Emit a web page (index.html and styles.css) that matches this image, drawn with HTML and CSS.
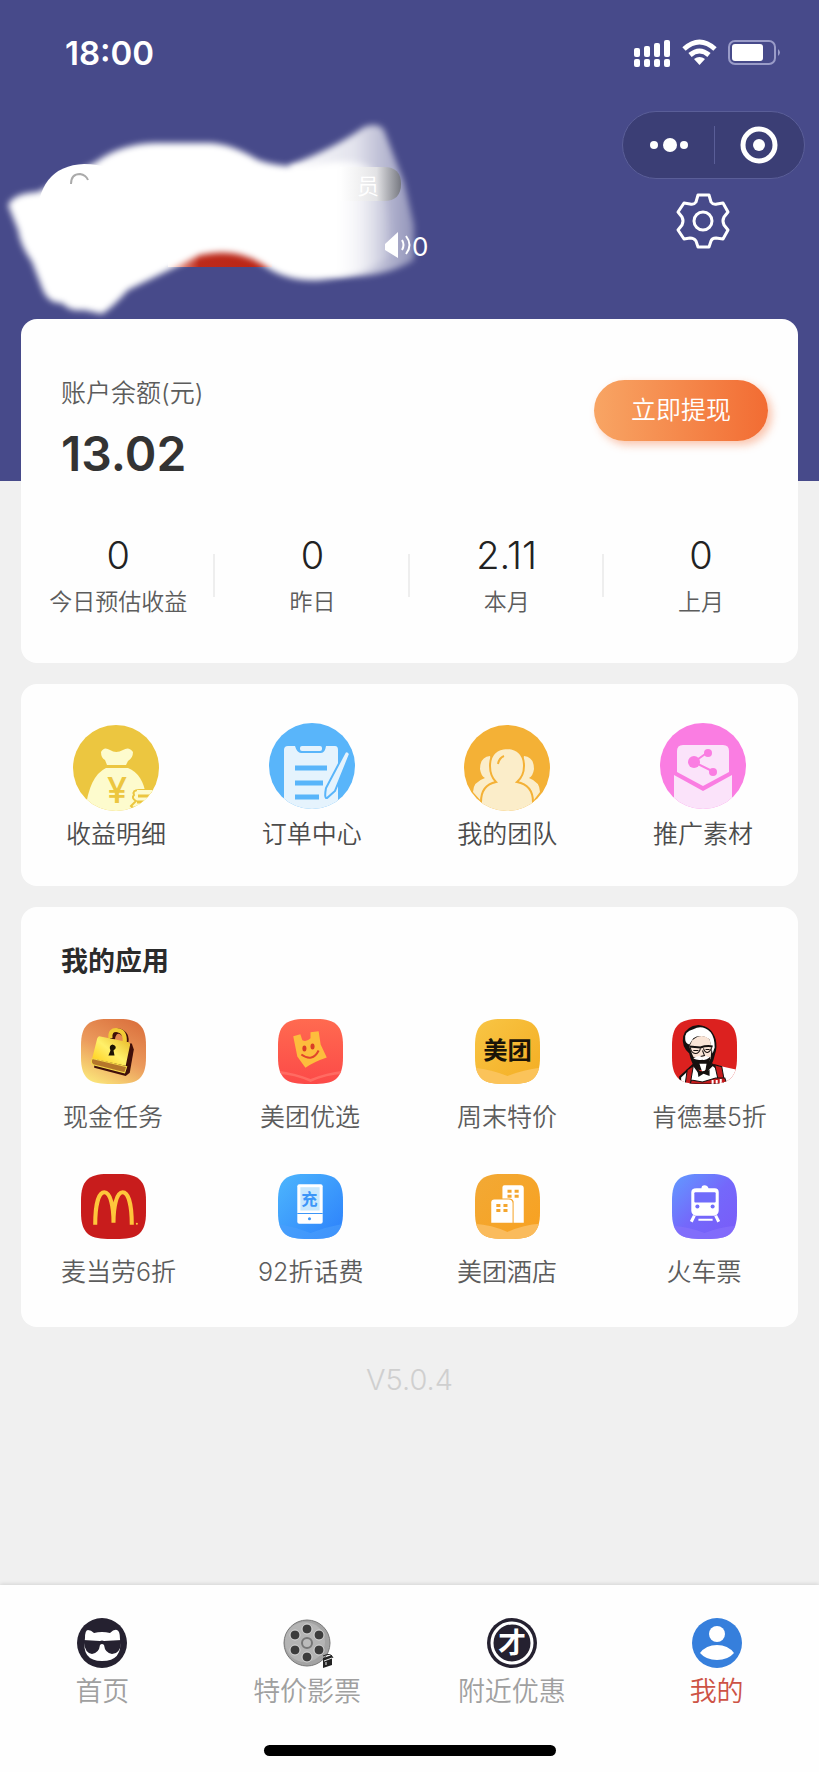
FILE: index.html
```html
<!DOCTYPE html>
<html lang="zh-CN">
<head>
  <meta charset="UTF-8" />
  <meta name="viewport" content="width=device-width, initial-scale=1.0" />
  <title>我的</title>
  <link rel="stylesheet" href="styles.css">
</head>
<body>
  <header class="header">
    <div class="status-bar">
      <span class="time">18:00</span>
      <svg class="status-icons" width="150" height="30" viewBox="0 0 150 30" aria-hidden="true">
        <g fill="#fff">
          <rect x="4" y="10" width="6" height="9" rx="2"/><rect x="14" y="8" width="6" height="11" rx="2"/><rect x="24" y="5" width="6" height="14" rx="2"/><rect x="34" y="2" width="6" height="17" rx="2"/>
          <rect x="4" y="21" width="6" height="8" rx="2"/><rect x="14" y="21" width="6" height="8" rx="2"/><rect x="24" y="21" width="6" height="8" rx="2"/><rect x="34" y="21" width="6" height="8" rx="2"/>
          <path d="M69.500 27 L64 21 Q69.500 17 75 21Z"/>
          <rect x="102" y="6" width="31" height="17" rx="3"/>
        </g>
        <g fill="none" stroke="#fff" stroke-width="5">
          <path d="M54 11 Q69.500 -3 85 11"/>
          <path d="M60 17 Q69.500 9 79 17"/>
        </g>
        <rect x="99" y="3" width="46" height="23" rx="6" fill="none" stroke="#9a9cc8" stroke-width="2"/>
        <path d="M148 11 Q152 14.500 148 18Z" fill="#9a9cc8"/>
      </svg>
    </div>
    <div class="profile">
      <!-- 头像、昵称涂抹区 -->
      <svg class="smear" width="450" height="219" viewBox="0 0 450 219" role="img" aria-label="用户信息">
        <defs>
          <filter id="soft" x="-10%" y="-10%" width="120%" height="120%"><feGaussianBlur stdDeviation="3"/></filter>
          <linearGradient id="tail" x1="0" x2="1"><stop offset="0" stop-color="#fff"/><stop offset=".55" stop-color="#fff" stop-opacity=".85"/><stop offset="1" stop-color="#fff" stop-opacity=".4"/></linearGradient>
          <linearGradient id="veil" x1="0" x2="1"><stop offset=".86" stop-color="#fff"/><stop offset="1" stop-color="#fff" stop-opacity=".1"/></linearGradient>
          <linearGradient id="tag" x1="0" x2="1"><stop offset="0" stop-color="#fff"/><stop offset=".6" stop-color="#e4e4e5"/><stop offset="1" stop-color="#72747a"/></linearGradient>
          <linearGradient id="red" x1="0" x2="1"><stop offset="0" stop-color="#f6c9c0"/><stop offset=".3" stop-color="#bd2a1b"/><stop offset="1" stop-color="#b92416"/></linearGradient>
        </defs>
        <path d="M290 65 Q335 48 364 27 Q378 22 384 30 L404 82 L414 125 L414 160 Q385 178 340 176 L280 160Z" fill="url(#tail)" filter="url(#soft)"/>
        <path d="M168 167 V153 Q230 135 272 156 V167Z" fill="url(#red)"/>
        <path d="M8 105 Q14 93 38 92 L96 62 Q120 44 155 43 H210 Q232 44 258 60 Q280 68 310 66 Q355 56 372 68 Q392 100 390 156 Q365 176 320 180 Q285 182 262 164 Q236 147 200 155 Q165 172 128 190 Q112 208 102 214 L84 210 Q70 212 62 203 Q48 204 42 188 L32 162 Q20 145 18 130Z" fill="url(#veil)" filter="url(#soft)"/>
        <path d="M37 130 Q34 66 84 64 Q110 64 130 80 V160Z" fill="#fff"/>
        <path d="M71 84 Q71 74 80 74 Q86 75 88 80" fill="none" stroke="#aaa" stroke-width="2"/>
        <path d="M340 67 H384 Q401 67 401 84 T384 101 H340Z" fill="url(#tag)" opacity=".9"/>
        <text class="smear-tag" x="357" y="94">员</text>
        <path d="M385 144 L398 132 V158 L385 150Z" fill="#fff"/>
        <path d="M402 140 Q405 145 402 150 M406 136 Q413 145 406 154" fill="none" stroke="#fff" stroke-width="2"/>
        <text class="smear-count" x="412" y="156">0</text>
      </svg>
      <div class="tools">
        <div class="capsule">
          <button class="capsule-btn" aria-label="更多">
            <svg width="40" height="36" viewBox="0 0 40 36" fill="#fff"><circle cx="6" cy="18" r="4"/><circle cx="22" cy="18" r="7"/><circle cx="36" cy="18" r="4"/></svg>
          </button>
          <button class="capsule-btn" aria-label="关闭">
            <svg width="38" height="38" viewBox="0 0 38 38"><circle cx="19" cy="19" r="16" fill="none" stroke="#fff" stroke-width="5"/><circle cx="19" cy="19" r="6" fill="#fff"/></svg>
          </button>
        </div>
        <button class="gear" aria-label="设置">
          <svg width="54" height="56" viewBox="0 0 54 56" fill="none" stroke="#fff" stroke-width="3" stroke-linejoin="round">
            <path d="M22 2H33L35 9Q37 12 41 11L47 10L52 19L48 24Q46 28 48 32L52 37L47 46L40 45Q36 45 35 48L33 54H22L20 48Q18 45 14 45L8 46L2 37L6 32Q8 28 6 24L2 19L8 10L14 11Q18 12 20 9Z"/>
            <circle cx="27" cy="28" r="9"/>
          </svg>
        </button>
      </div>
    </div>
  </header>

  <main class="main">
    <section class="card balance">
      <div class="balance-head">
        <div>
          <div class="balance-label">账户余额(元)</div>
          <div class="balance-num">13.02</div>
        </div>
        <button class="withdraw">立即提现</button>
      </div>
      <div class="stats">
        <div class="stat"><b>0</b><span>今日预估收益</span></div>
        <div class="stat"><b>0</b><span>昨日</span></div>
        <div class="stat"><b>2.11</b><span>本月</span></div>
        <div class="stat"><b>0</b><span>上月</span></div>
      </div>
    </section>

    <nav class="card menu">
      <a class="menu-item" href="#income">
        <svg width="86" height="90" viewBox="0 0 86 90">
          <defs><clipPath id="c1"><circle cx="43" cy="46" r="43"/></clipPath></defs>
          <g clip-path="url(#c1)">
            <rect width="86" height="90" fill="#ecc640"/>
            <path d="M28 30Q31 24 37 28Q43 32 50 28Q56 24 60 30Q60 36 55 39L53 43H34L32 38Q28 36 28 30Z" fill="#fdfbcd"/>
            <path d="M33 46H55Q70 52 73 74V90H12Q16 54 33 46Z" fill="#fdfbcd"/>
            <path d="M58 84L63 79Q58 76 61 73Q59 68 66 68H80L72 82L60 86Z" fill="#fdfbcd" stroke="#ecc640" stroke-width="2"/>
            <path d="M64 68H84V90H62L68 80H64Z" fill="#fdfbcd"/>
            <path d="M65 74H84M64 80H76" stroke="#ecc640" stroke-width="3"/>
          </g>
          <text class="yen" x="44" y="81">¥</text>
        </svg>
        <span>收益明细</span>
      </a>
      <a class="menu-item" href="#orders">
        <svg width="86" height="90" viewBox="0 0 86 90">
          <defs><clipPath id="c2"><circle cx="43" cy="44" r="43"/></clipPath></defs>
          <g clip-path="url(#c2)">
            <rect width="86" height="90" fill="#59b5fa"/>
            <path d="M19 24H26Q28 31 32 31H52Q56 31 57 24H66Q69 24 69 28V90H15V28Q15 24 19 24Z" fill="#e5f3fd"/>
            <rect x="31" y="24" width="22" height="5" rx="2" fill="#e5f3fd"/>
            <path d="M26 46H58M26 61H54M26 75H50" stroke="#59b5fa" stroke-width="5"/>
            <path d="M76 30Q79 28 81 32L66 69L58 76Q55 77 57 66Z" fill="#e5f3fd" stroke="#59b5fa" stroke-width="2"/>
          </g>
        </svg>
        <span>订单中心</span>
      </a>
      <a class="menu-item" href="#team">
        <svg width="86" height="90" viewBox="0 0 86 90">
          <defs><clipPath id="c3"><circle cx="43" cy="46" r="43"/></clipPath></defs>
          <g clip-path="url(#c3)">
            <rect width="86" height="90" fill="#f4b136"/>
            <g fill="#fbedc9">
              <path d="M26 34Q16 35 16 47Q17 54 21 56Q9 60 9 70L17 79L34 60ZM60 34Q70 35 70 47Q69 54 65 56Q76 60 76 70L69 79L52 60Z"/>
              <path d="M43 26Q60 27 60 44Q60 54 53 60Q69 63 69 80V90H17V80Q17 63 32 60Q26 54 26 44Q26 27 43 26Z" stroke="#f4b136" stroke-width="2"/>
            </g>
            <path d="M34 42Q35 36 40 34" fill="none" stroke="#f4b136" stroke-width="2"/>
          </g>
        </svg>
        <span>我的团队</span>
      </a>
      <a class="menu-item" href="#material">
        <svg width="86" height="90" viewBox="0 0 86 90">
          <defs><clipPath id="c4"><circle cx="43" cy="44" r="43"/></clipPath></defs>
          <g clip-path="url(#c4)">
            <rect width="86" height="90" fill="#fa7de2"/>
            <path d="M23 23H63Q69 23 69 29V50L43 64L17 50V29Q17 23 23 23Z" fill="#fbe3fa"/>
            <path d="M14 53L43 69L72 53V90H14Z" fill="#fbe3fa"/>
            <path d="M48 30L34 40L52 49" fill="none" stroke="#fa7de2" stroke-width="2"/>
            <g fill="#fa7de2"><circle cx="48" cy="31" r="4"/><circle cx="34" cy="40" r="6"/><circle cx="53" cy="50" r="4"/></g>
          </g>
        </svg>
        <span>推广素材</span>
      </a>
    </nav>

    <section class="card apps">
      <h2 class="apps-title">我的应用</h2>
      <svg class="defs" width="0" height="0" aria-hidden="true">
        <defs>
          <clipPath id="tile"><path d="M26 0H38C57 0 64 7 64 26V38C64 57 57 64 38 64H26C7 64 0 57 0 38V26C0 7 7 0 26 0Z"/></clipPath>
          <linearGradient id="g1" x1=".2" y1="1" x2=".7" y2="0"><stop offset="0" stop-color="#fbe67a"/><stop offset=".5" stop-color="#eb9a5c"/><stop offset="1" stop-color="#dc7440"/></linearGradient>
          <linearGradient id="g2" x1="0" y1="1" x2="1" y2="0"><stop offset="0" stop-color="#ffc90e"/><stop offset=".5" stop-color="#fff06a"/><stop offset="1" stop-color="#e6b422"/></linearGradient>
          <linearGradient id="g3" x1="0" y1="0" x2="0" y2="1"><stop offset="0" stop-color="#ff6a50"/><stop offset="1" stop-color="#fc4a48"/></linearGradient>
          <linearGradient id="g4" x1="0" y1="0" x2="1" y2="1"><stop offset="0" stop-color="#f8c545"/><stop offset="1" stop-color="#f4ad22"/></linearGradient>
          <linearGradient id="g5" x1="0" y1="0" x2="1" y2="1"><stop offset="0" stop-color="#4db6fd"/><stop offset="1" stop-color="#2c80fb"/></linearGradient>
          <linearGradient id="g6" x1="0" y1="0" x2="1" y2="1"><stop offset="0" stop-color="#f2a935"/><stop offset="1" stop-color="#f8a120"/></linearGradient>
          <linearGradient id="g7" x1="0" y1="0" x2="1" y2="1"><stop offset="0" stop-color="#619bff"/><stop offset=".5" stop-color="#7468fb"/><stop offset="1" stop-color="#7a5af8"/></linearGradient>
        </defs>
      </svg>
      <div class="app-row">
        <a class="app" href="#cash">
          <svg width="65" height="65" viewBox="0 0 64 64"><g clip-path="url(#tile)">
            <rect width="64" height="64" fill="url(#g1)"/>
            <path d="M17 23L50 24L52 30L48 53L44 56L13 48V43Z" fill="#3f0f0a"/>
            <path d="M31 20Q32 11 38 12Q46 15 44 24" fill="none" stroke="#3f0f0a" stroke-width="5"/>
            <path d="M29 19Q28 10 36 11Q44 12 43 23" fill="none" stroke="#f2cb35" stroke-width="4"/>
            <path d="M18 17L47 23Q49 24 48 27L44 46L11 39L16 19Q17 17 18 17Z" fill="url(#g2)"/>
            <path d="M11 39L45 47L43 53L12 45Q9 43 11 39Z" fill="#b5762a" stroke="#f6d94a" stroke-width="1"/>
            <path d="M31 25Q35 26 34 29L32 31L33 36H27L29 31Q27 26 31 25Z" fill="#1c1404"/>
          </g></svg>
          <span>现金任务</span>
        </a>
        <a class="app" href="#youxuan">
          <svg width="65" height="65" viewBox="0 0 64 64"><g clip-path="url(#tile)">
            <rect width="64" height="64" fill="url(#g3)"/>
            <path d="M0 51Q16 53 32 59Q48 53 64 51V54Q48 55 32 62Q16 55 0 54Z" fill="#ff6b62"/>
            <path d="M15 17L22 15L24 21Q28 23 32 19L32 13L40 12L42 25L48 38Q36 42 27 48L19 37Z" fill="#fdbd3d"/>
            <path d="M23 35Q34 43 40 31" fill="none" stroke="#e0452c" stroke-width="2"/>
            <ellipse cx="26" cy="29" rx="2" ry="3" fill="#d93d27"/><ellipse cx="34" cy="27" rx="2" ry="3" fill="#d93d27"/>
          </g></svg>
          <span>美团优选</span>
        </a>
        <a class="app" href="#weekend">
          <svg width="65" height="65" viewBox="0 0 64 64"><g clip-path="url(#tile)">
            <rect width="64" height="64" fill="url(#g4)"/>
            <path d="M0 48Q16 50 32 56Q48 50 64 48V64H0Z" fill="#fbc35a"/>
            <text class="mt-logo" x="32" y="39">美团</text>
          </g></svg>
          <span>周末特价</span>
        </a>
        <a class="app" href="#kfc">
          <svg width="65" height="65" viewBox="0 0 64 64"><g clip-path="url(#tile)">
            <rect width="64" height="64" fill="#dc211f"/>
            <path d="M46 46L64 50V64H46Z" fill="#fff"/>
            <path d="M11 17Q14 7 26 6Q39 7 43 20Q45 28 42 36Q40 46 34 51L26 50Q19 46 17 34Q9 27 11 17Z" fill="#14100f"/>
            <path d="M13 20Q12 12 21 10Q30 5 38 13Q42 18 42 28L40 34L37 20Q28 14 21 19L17 25Q13 24 13 20Z" fill="#fff"/>
            <path d="M20 21Q29 13 37 20L39 28L38 39Q35 46 30 46Q23 43 20 35L17 27Z" fill="#f9e4d6"/>
            <path d="M17 27L28 28Q34 26 40 27" fill="none" stroke="#14100f" stroke-width="2"/>
            <path d="M18 28Q19 34 23 34Q27 34 28 29M31 29Q32 33 35 33Q38 32 39 28" fill="none" stroke="#14100f" stroke-width="1"/>
            <path d="M21 31H26M33 30H37M30 31L32 36L28 37" fill="none" stroke="#14100f" stroke-width="1"/>
            <path d="M20 38Q25 37 29 39Q34 36 38 38L36 45Q31 49 25 45Q21 42 20 38Z" fill="#14100f"/>
            <path d="M21 39Q26 35 30 38Q34 35 37 38Q33 41 30 40Q25 41 21 39ZM27 44H34L33 50L30 53Z" fill="#fff"/>
            <path d="M8 57L21 45L27 53L33 52L40 45L46 50L52 64H8Z" fill="#fff" stroke="#14100f" stroke-width="2"/>
            <path d="M21 46L18 64H13L15 50ZM42 45L45 58H51L49 47ZM19 60L30 62L43 58H52L54 64H18Z" fill="#c51a1c" stroke="#14100f" stroke-width="1"/>
            <path d="M25 50L31 53L37 50V56L31 54L26 57Z" fill="#14100f"/>
            <path d="M40 60V64M44 60V64M48 59V64" stroke="#fff" stroke-width="2"/>
          </g></svg>
          <span>肯德基5折</span>
        </a>
      </div>
      <div class="app-row">
        <a class="app" href="#mcd">
          <svg width="65" height="65" viewBox="0 0 64 64"><g clip-path="url(#tile)">
            <rect width="64" height="64" fill="#c81c1c"/>
            <path d="M14 50C14 32 17 18 23 18C29 18 32 32 32 48C32 32 35 18 41 18C47 18 50 32 50 50" fill="none" stroke="#fec63b" stroke-width="4"/>
            <circle cx="55" cy="49" r="1" fill="#fec63b"/>
          </g></svg>
          <span>麦当劳6折</span>
        </a>
        <a class="app" href="#recharge">
          <svg width="65" height="65" viewBox="0 0 64 64"><g clip-path="url(#tile)">
            <rect width="64" height="64" fill="url(#g5)"/>
            <path d="M0 49Q16 52 32 58Q48 52 64 49V64H0Z" fill="#4b9ffc" opacity=".6"/>
            <rect x="19" y="10" width="25" height="39" rx="2" fill="#fff"/>
            <rect x="22" y="13" width="19" height="23" fill="#c9e8fd"/>
            <path d="M19 39H44" stroke="#3c96f8" stroke-width="1"/>
            <circle cx="31" cy="44" r="1.500" fill="#3c96f8"/>
            <text class="chong" x="31" y="31">充</text>
          </g></svg>
          <span>92折话费</span>
        </a>
        <a class="app" href="#hotel">
          <svg width="65" height="65" viewBox="0 0 64 64"><g clip-path="url(#tile)">
            <rect width="64" height="64" fill="url(#g6)"/>
            <path d="M0 49Q16 50 32 57Q48 50 64 49V64H0Z" fill="#fabb5c"/>
            <path d="M27 24V13Q27 11 29 11H45Q48 11 48 14V48H38V27Q37 24 34 24Z" fill="#fff"/>
            <path d="M19 25H33Q37 25 37 29V48H16V28Q16 25 19 25Z" fill="#fff"/>
            <path d="M32 17H36M39 17H43M32 22H36M39 22H43M21 31H25M28 31H32M21 36H25M28 36H32" stroke="#f4a62e" stroke-width="3"/>
          </g></svg>
          <span>美团酒店</span>
        </a>
        <a class="app" href="#train">
          <svg width="65" height="65" viewBox="0 0 64 64"><g clip-path="url(#tile)">
            <rect width="64" height="64" fill="url(#g7)"/>
            <path d="M0 51Q16 52 32 58Q48 52 64 51V64H0Z" fill="#8873fc" opacity=".6"/>
            <path d="M24 14H29Q29 11 32 11T36 14H42Q46 14 46 18V36Q46 40 42 41H23Q19 40 19 36V18Q19 14 24 14Z" fill="#fff"/>
            <rect x="22" y="18" width="21" height="10" rx="1" fill="#706cfb"/>
            <circle cx="25" cy="32" r="2" fill="#706cfb"/><circle cx="40" cy="32" r="2" fill="#706cfb"/>
            <path d="M22 41L19 47M43 41L46 47" stroke="#fff" stroke-width="3"/><path d="M26 45H40" stroke="#fff" stroke-width="2"/>
          </g></svg>
          <span>火车票</span>
        </a>
      </div>
    </section>
    <p class="version">V5.0.4</p>
  </main>

  <footer class="tabbar">
    <nav class="tabs">
      <a class="tab" href="#home">
        <svg width="50" height="50" viewBox="0 0 50 50">
          <circle cx="25" cy="25" r="25" fill="#252130"/>
          <path d="M8 20Q8 12 11 12Q14 12 17 15Q25 13 33 15Q37 11 40 12Q43 13 43 21Q46 43 25 43Q4 43 8 20Z" fill="#fff"/>
          <path d="M6 22L23 23Q25 22 27 23L45 22L44 25Q43 36 35 36Q28 35 27 27Q25 25 23 27Q22 35 15 36Q8 35 7 25Z" fill="#252130"/>
        </svg>
        <span>首页</span>
      </a>
      <a class="tab" href="#movie">
        <svg width="50" height="50" viewBox="0 0 50 50">
          <circle cx="25" cy="25" r="23" fill="#a3a3a3" stroke="#777" stroke-width="1"/>
          <circle cx="23" cy="24" r="20" fill="#b4b4b4"/>
          <g fill="#3c3c3c" stroke="#dadada" stroke-width="1"><circle cx="25" cy="11" r="5"/><circle cx="37" cy="17" r="5"/><circle cx="37" cy="32" r="5"/><circle cx="25" cy="39" r="5"/><circle cx="13" cy="32" r="5"/><circle cx="13" cy="17" r="5"/></g>
          <circle cx="25" cy="25" r="5" fill="#bbb" stroke="#777" stroke-width="2"/>
          <path d="M41 38Q49 34 51 40" fill="none" stroke="#222" stroke-width="1"/>
          <path d="M41 40L50 37V47L41 50Z" fill="#222"/>
          <path d="M42 43L50 40M44 47V44" stroke="#eee" stroke-width="1"/>
        </svg>
        <span>特价影票</span>
      </a>
      <a class="tab" href="#nearby">
        <svg width="50" height="50" viewBox="0 0 50 50">
          <circle cx="25" cy="25" r="25" fill="#252130"/>
          <circle cx="25" cy="25" r="20" fill="none" stroke="#fff" stroke-width="3"/>
          <text class="cai" x="25" y="35">才</text>
        </svg>
        <span>附近优惠</span>
      </a>
      <a class="tab active" href="#mine">
        <svg width="50" height="50" viewBox="0 0 50 50">
          <circle cx="25" cy="25" r="25" fill="#367fdc"/>
          <circle cx="25" cy="16" r="8" fill="#fff"/>
          <path d="M8 35Q14 27 25 27T42 35Q36 42 25 42T8 35Z" fill="#fff"/>
        </svg>
        <span>我的</span>
      </a>
    </nav>
    <div class="home-bar"></div>
  </footer>
</body>
</html>
```
FILE: styles.css
```css
* { box-sizing: border-box; }
body {
  margin: 0;
  min-height: 100vh;
  display: flex;
  flex-direction: column;
  background: #f0f0f0;
  color: #5c5c5c;
  font-family: Inter, "Noto Sans CJK SC", sans-serif;
  font-size: 25px;
  font-weight: 350;
  line-height: 32px;
}
a { color: inherit; text-decoration: none; }
button { border: 0; padding: 0; background: none; font: inherit; color: #fff; cursor: pointer; }
svg { display: block; flex: none; }

/* 顶部 */
.header { background: #474a8a; padding-bottom: 162px; color: #fff; }
.status-bar { display: flex; justify-content: space-between; align-items: center; padding: 33px 39px 27px 65px; }
.time { font-size: 33px; line-height: 40px; font-weight: 600; }
.profile { display: flex; justify-content: space-between; }
.smear-tag { fill: #fff; font-size: 22px; }
.smear-count { fill: #fff; font-size: 26px; font-weight: 400; }
.tools { padding: 11px 14px 0 0; }
.capsule { display: flex; width: 183px; height: 68px; border: 1px solid #5a5e98; border-radius: 34px; background: #3b3e75; }
.capsule-btn { flex: 1; display: flex; align-items: center; justify-content: center; }
.capsule-btn + .capsule-btn { background: linear-gradient(#5a5e98, #5a5e98) no-repeat left center / 1px 38px; }
.gear { display: block; margin: 14px auto 0 54px; }

/* 卡片 */
.main { margin: -162px 21px 0; }
.card { background: #fefefe; border-radius: 16px; margin-bottom: 21px; }

.balance { padding: 58px 0 45px; }
.balance-head { display: flex; justify-content: space-between; align-items: flex-start; padding: 0 30px 0 40px; }
.balance-num { margin-top: 17px; font-size: 48px; line-height: 56px; font-weight: 600; color: #333; }
.withdraw {
  width: 174px;
  height: 61px;
  margin-top: 3px;
  padding-bottom: 2px;
  border-radius: 31px;
  background: linear-gradient(90deg, #f8a564, #f26c33);
  box-shadow: 4px 4px 8px rgba(244, 112, 54, 0.4);
}
.stats { display: grid; grid-template-columns: repeat(4, 1fr); margin-top: 51px; text-align: center; }
.stat { background: linear-gradient(#eee, #eee) no-repeat right center / 2px 43px; }
.stat:last-child { background: none; }
.stat b { display: block; margin-bottom: 9px; font-size: 38px; line-height: 44px; font-weight: 350; color: #222; }
.stat span { display: block; font-size: 23px; white-space: nowrap; }

.menu { display: flex; justify-content: space-between; padding: 38px 45px 36px; color: #4c4c4c; }
.menu-item { display: flex; flex-direction: column; align-items: center; gap: 6px; }
.yen { fill: #ecc640; font-size: 36px; font-weight: 500; text-anchor: middle; }

.apps { padding: 37px 42px 39px 40px; }
.apps-title { margin: 0 0 39px; font-size: 27px; line-height: 36px; font-weight: 600; color: #2b2b2b; }
.defs { position: absolute; }
.app-row { display: flex; justify-content: space-between; }
.app-row + .app-row { margin-top: 41px; }
.app { width: 104px; text-align: center; white-space: nowrap; }
.app svg { margin: 0 auto 17px; }
.app span { display: block; }
.mt-logo { fill: #1a1408; font-size: 24px; font-weight: 700; text-anchor: middle; }
.chong { fill: #3c96f8; font-size: 16px; font-weight: 700; text-anchor: middle; }

.version { margin: 35px 0; text-align: center; font-size: 29px; line-height: 36px; color: #cfcfcf; }

/* 底部导航 */
.tabbar { margin-top: auto; padding: 33px 0 16px; background: #fefefe; box-shadow: 0 -1px 4px rgba(0, 0, 0, 0.12); }
.tabs { display: grid; grid-template-columns: repeat(4, 1fr); font-size: 27px; line-height: 34px; color: #a0a0a0; }
.tab { display: flex; flex-direction: column; align-items: center; gap: 7px; }
.tab svg { overflow: visible; }
.tab.active { color: #cd5345; }
.cai { fill: #fff; font-size: 28px; font-weight: 700; text-anchor: middle; }
.home-bar { width: 292px; height: 11px; margin: 36px auto 0; border-radius: 6px; background: #000; }
```
